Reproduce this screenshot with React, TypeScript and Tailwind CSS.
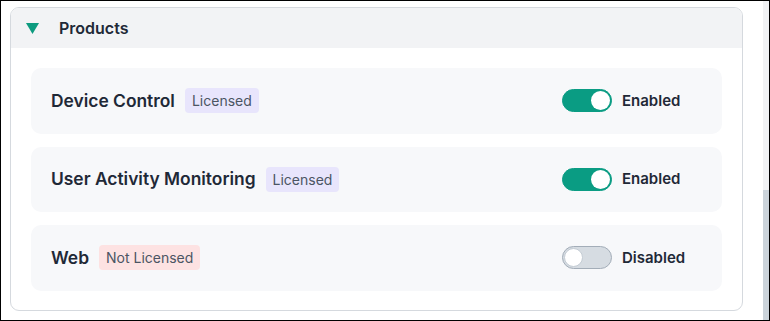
import React, { useState } from 'react';

type Product = {
  name: string;
  licensed: boolean;
  enabled: boolean;
};

const initialProducts: Product[] = [
  { name: 'Device Control', licensed: true, enabled: true },
  { name: 'User Activity Monitoring', licensed: true, enabled: true },
  { name: 'Web', licensed: false, enabled: false },
];

function Toggle({ on, onChange }: { on: boolean; onChange: () => void }) {
  return (
    <button
      type="button"
      onClick={onChange}
      className={`relative w-[50px] h-[23px] rounded-full border flex items-center cursor-pointer ${
        on ? 'bg-[#0a9c83] border-[#0a9c83] justify-end' : 'bg-[#d6dce2] border-[#a3adb8] justify-start'
      }`}
    >
      <span
        className={`w-[19px] h-[19px] rounded-full bg-white ${on ? 'mr-[1px]' : 'ml-[1px] border border-[#c3cbd3]'}`}
      />
    </button>
  );
}

export default function App() {
  const [products, setProducts] = useState(initialProducts);

  const toggle = (i: number) => {
    setProducts((prev) => prev.map((p, idx) => (idx === i ? { ...p, enabled: !p.enabled } : p)));
  };

  return (
    <div
      className="w-[770px] h-[321px] border border-black bg-white flex overflow-hidden"
      style={{ fontFamily: 'Inter, "Noto Sans", sans-serif' }}
    >
      {/* Content */}
      <div className="flex-1 pl-[9px] pt-[6px] pr-[19px]">
        <div className="w-[733px] h-[304px] rounded-[9px] border border-[#d5d9de] overflow-hidden bg-white">
          {/* Header */}
          <div className="h-[40px] bg-[#f2f3f5] flex items-center pl-[15px]">
            <svg width="13" height="11" viewBox="0 0 13 11" className="mt-[1px]">
              <polygon points="0,0 13,0 6.5,11" fill="#0d9b7f" />
            </svg>
            <span className="ml-[20px] text-[16px] font-semibold text-[#1f2937]">Products</span>
          </div>

          {/* Rows */}
          <div className="px-[20px] pt-[20px] flex flex-col gap-[13px]">
            {products.map((p, i) => (
              <div
                key={p.name}
                className="h-[65.5px] rounded-[10px] bg-[#f7f8fa] flex items-center pl-[20px] pr-[37px]"
              >
                <span className="text-[17.4px] font-semibold text-[#1f2937]">{p.name}</span>
                <span
                  className={`ml-[10px] h-[25px] px-[7px] rounded-[4px] flex items-center text-[14px] text-[#4b5563] ${
                    p.licensed ? 'bg-[#e8e5fc]' : 'bg-[#fde2e2]'
                  }`}
                >
                  {p.licensed ? 'Licensed' : 'Not Licensed'}
                </span>
                <div className="ml-auto flex items-center">
                  <Toggle on={p.enabled} onChange={() => toggle(i)} />
                  <span className="ml-[10px] w-[63px] text-[15px] font-semibold text-[#1f2937]">
                    {p.enabled ? 'Enabled' : 'Disabled'}
                  </span>
                </div>
              </div>
            ))}
          </div>
        </div>
      </div>

      {/* Scrollbar */}
      <div className="w-[6px] h-full bg-[#f1f2f4] flex flex-col">
        <div className="flex-1" />
        <div className="h-[130px] bg-[#cbd3da]" />
      </div>
    </div>
  );
}
